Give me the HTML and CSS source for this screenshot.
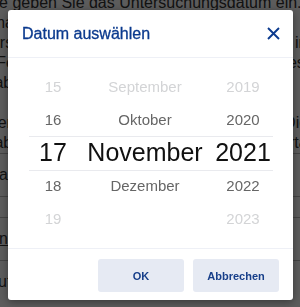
FILE: index.html
```html
<!DOCTYPE html>
<html lang="de">
<head>
  <meta charset="UTF-8">
  <meta name="viewport" content="width=device-width, initial-scale=1.0">
  <title>Datum auswählen</title>
  <link rel="stylesheet" href="styles.css">
</head>
<body>
  <div class="page" aria-hidden="true">
    <div class="page-inner">
      <p class="text first">Bitte geben Sie das Untersuchungsdatum ein. Normalerweise liegt im Befund nach der Untersuchung das Datum vor. Tragen Sie hier in das Feld das Datum der Untersuchung ein, diese Angaben sind notwendig.</p>
      <p class="text">Weitere Informationen finden Sie im Befund. Die Angaben gelten für die Untersuchung vom Vortag.</p>
      <div class="row">Eintrag bearbeiten</div>
      <div class="row spacer"></div>
      <div class="row"><a href="#">Befund hinzufügen</a></div>
      <div class="row">Ablauf der Untersuchung</div>
    </div>
  </div>

  <div class="overlay">
    <div class="dialog">
      <div class="dialog-header">
        <h2>Datum auswählen</h2>
        <button class="close" aria-label="Schließen">
          <svg width="13" height="13" viewBox="0 0 13 13">
            <path d="M1 1 L12 12 M12 1 L1 12" stroke="#0b3a8e" stroke-width="1.9" fill="none"/>
          </svg>
        </button>
      </div>

      <div class="picker">
        <div class="cell far">15</div><div class="cell far">September</div><div class="cell far">2019</div>
        <div class="cell near">16</div><div class="cell near">Oktober</div><div class="cell near">2020</div>
        <div class="cell sel">17</div><div class="cell sel">November</div><div class="cell sel">2021</div>
        <div class="cell near">18</div><div class="cell near">Dezember</div><div class="cell near">2022</div>
        <div class="cell far">19</div><div class="cell far"></div><div class="cell far">2023</div>
        <div class="selection"></div>
      </div>

      <div class="dialog-footer">
        <button class="btn">OK</button>
        <button class="btn">Abbrechen</button>
      </div>
    </div>
  </div>
</body>
</html>
```

FILE: styles.css
```css
/* page behind the dialog */
body {
  margin: 0;
  height: 307px;
  overflow: hidden;
  background: #fff;
  font-family: "Liberation Sans", Arial, sans-serif;
  color: #333;
}
.page {
  width: 300px;
  height: 307px;
  overflow: hidden;
}
.page-inner {
  margin-left: -34px;
  width: 360px;
}
.text {
  margin: 0;
  font-size: 16px;
  line-height: 20px;
}
.text.first {
  margin-top: -7px;
  text-indent: 10px;
}
.text + .text {
  margin-top: 20px;
}
.row {
  height: 42px;
  line-height: 42px;
  font-size: 16px;
  border-top: 1px solid #bbb;
}
.row.spacer {
  height: 20px;
}
.row a {
  color: #333;
}

/* modal */
.overlay {
  position: fixed;
  inset: 0;
  background: rgba(0, 0, 0, 0.64);
  display: flex;
  align-items: flex-start;
  justify-content: flex-start;
  padding: 10px 0 0 8px;
}
.dialog {
  width: 285px;
  height: 290px;
  background: #fff;
  border-radius: 3px;
  box-shadow: 0 2px 8px rgba(0, 0, 0, 0.4);
  display: flex;
  flex-direction: column;
}
.dialog-header {
  height: 47px;
  border-bottom: 1px solid #eef0f6;
  display: flex;
  align-items: center;
  justify-content: space-between;
  padding: 0 13px 0 14px;
}
.dialog-header h2 {
  margin: 0;
  font-size: 16px;
  font-weight: normal;
  color: #0b3a8e;
  -webkit-text-stroke: 0.3px #0b3a8e;
}
.close {
  border: none;
  background: none;
  padding: 0;
  width: 14px;
  height: 14px;
  display: flex;
  align-items: center;
  justify-content: center;
  cursor: pointer;
}

.picker {
  position: relative;
  margin: 12px 20px 0 21px;
  display: grid;
  grid-template-columns: 48px 1fr 60px;
  grid-auto-rows: 33px;
  height: 178px;
}
.cell {
  display: flex;
  align-items: center;
  justify-content: center;
  font-size: 15px;
  font-weight: 300;
}
.far {
  color: #d3d4d6;
}
.near {
  color: #666;
}
.sel {
  font-size: 25px;
  color: #111;
}
.selection {
  position: absolute;
  left: 0;
  right: 0;
  top: 66px;
  height: 33px;
  border-top: 1px solid #e9eaee;
  border-bottom: 1px solid #e9eaee;
  pointer-events: none;
}

.dialog-footer {
  border-top: 1px solid #eef0f6;
  display: flex;
  justify-content: flex-end;
  gap: 9px;
  padding: 10px 14px 0 0;
}
.btn {
  width: 86px;
  height: 33px;
  border: none;
  border-radius: 3px;
  background: #e6eaf3;
  color: #173f8a;
  font-family: "Liberation Sans", Arial, sans-serif;
  font-size: 11px;
  font-weight: bold;
  cursor: pointer;
}
```
